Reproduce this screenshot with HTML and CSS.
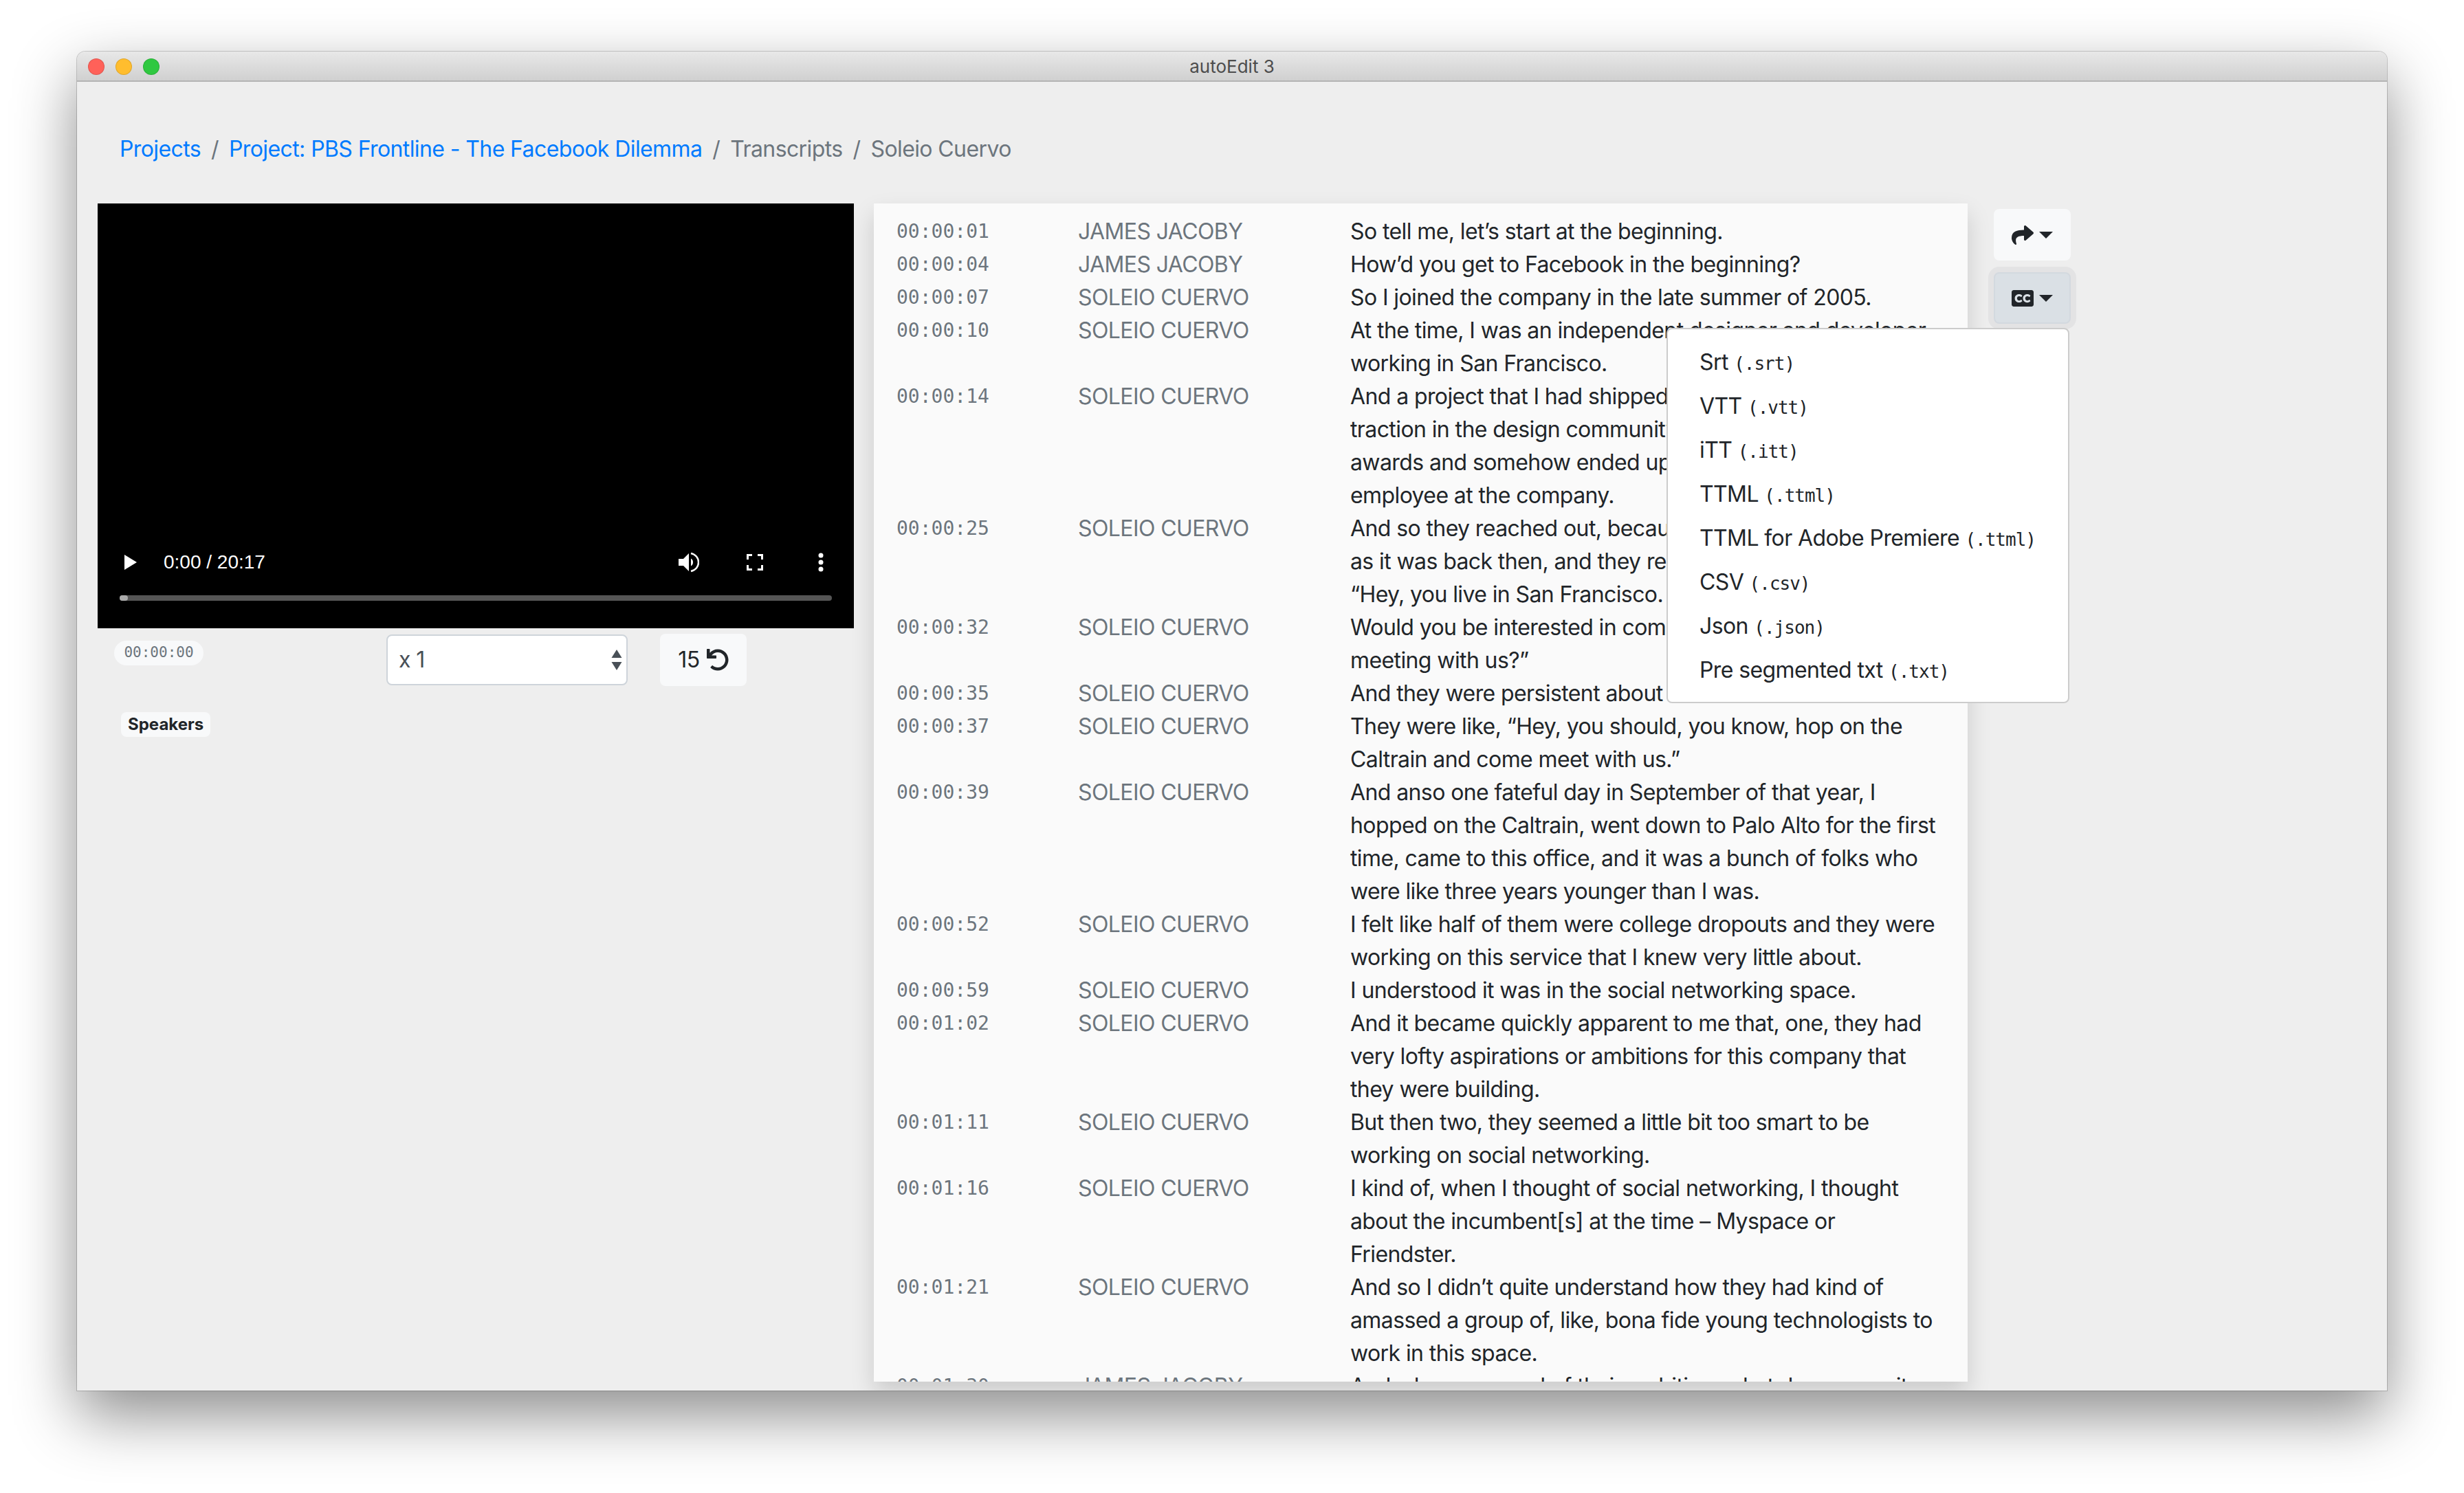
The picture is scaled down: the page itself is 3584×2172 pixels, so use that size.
FILE: index.html
```html
<!DOCTYPE html>
<html lang="en">
<head>
    <meta charset="UTF-8">
    <title>autoEdit 3</title>
    <link rel="stylesheet" href="styles.css">
</head>
<body>
    <div class="window">
        <div class="titlebar">
            <div class="lights">
                <span class="light red"></span>
                <span class="light yellow"></span>
                <span class="light green"></span>
            </div>
            <div class="title">autoEdit 3</div>
        </div>
        <nav class="breadcrumb">
            <a href="#">Projects</a><span class="sep">/</span>
            <a href="#">Project: PBS Frontline - The Facebook Dilemma</a><span class="sep">/</span>
            <span>Transcripts</span><span class="sep">/</span>
            <span>Soleio Cuervo</span>
        </nav>
        <div class="main">
            <section class="left">
                <div class="video">
                    <div class="controls">
                        <div class="ctrl">
                            <svg width="18" height="22" viewBox="0 0 18 22"><path d="M0 0L18 11L0 22Z" fill="#fff"/></svg>
                        </div>
                        <div class="time">0:00 / 20:17</div>
                        <div class="ctrl push">
                            <svg width="30" height="30" viewBox="0 0 30 30"><path d="M0 10H7L15 2V28L7 20H0Z" fill="#fff"/><path d="M18 9.5C20.5 11 21 13 21 15C21 17 20.5 19 18 20.5Z" fill="#fff"/><path d="M18 2C25 3.5 29 9 29 15C29 21 25 26.5 18 28" fill="none" stroke="#fff" stroke-width="2.5"/></svg>
                        </div>
                        <div class="ctrl">
                            <svg width="24" height="24" viewBox="0 0 24 24"><path d="M1.5 8V1.5H8M16 1.5H22.5V8M22.5 16V22.5H16M8 22.5H1.5V16" fill="none" stroke="#fff" stroke-width="3"/></svg>
                        </div>
                        <div class="ctrl">
                            <svg width="8" height="28" viewBox="0 0 8 28"><circle cx="4" cy="4" r="3.5" fill="#fff"/><circle cx="4" cy="14" r="3.5" fill="#fff"/><circle cx="4" cy="24" r="3.5" fill="#fff"/></svg>
                        </div>
                    </div>
                    <div class="track"><div class="thumb"></div></div>
                </div>
                <div class="tools">
                    <span class="timecode-pill">00:00:00</span>
                    <div class="speed">
                        <span>x 1</span>
                        <svg width="16" height="30" viewBox="0 0 16 30"><path d="M8 0L15.5 12H0.5Z" fill="#495057"/><path d="M0.5 18H15.5L8 30Z" fill="#495057"/></svg>
                    </div>
                    <div class="btn rewind">
                        <span>15</span>
                        <svg width="32" height="32" viewBox="0 0 512 512"><path fill="#212529" d="M212.333 224.333H12c-6.627 0-12-5.373-12-12V12C0 5.373 5.373 0 12 0h48c6.627 0 12 5.373 12 12v78.112C117.773 39.279 184.26 7.47 258.175 8.007c136.906.994 246.448 111.623 246.157 248.532C504.041 393.258 393.12 504 256.333 504c-64.089 0-122.496-24.313-166.51-64.215-5.099-4.622-5.334-12.554-.467-17.42l33.967-33.967c4.474-4.474 11.662-4.717 16.401-.525C170.76 415.336 211.58 432 256.333 432c97.268 0 176-78.716 176-176 0-97.267-78.716-176-176-176-58.496 0-110.28 28.476-142.274 72.333h98.274c6.627 0 12 5.373 12 12v48c0 6.627-5.373 12-12 12z"/></svg>
                    </div>
                </div>
                <span class="badge">Speakers</span>
            </section>

            <section class="transcript">
                <div class="row"><code>00:00:01</code><span class="who">JAMES JACOBY</span><p>So tell me, let’s start at the beginning.</p></div>
                <div class="row"><code>00:00:04</code><span class="who">JAMES JACOBY</span><p>How’d you get to Facebook in the beginning?</p></div>
                <div class="row"><code>00:00:07</code><span class="who">SOLEIO CUERVO</span><p>So I joined the company in the late summer of 2005.</p></div>
                <div class="row"><code>00:00:10</code><span class="who">SOLEIO CUERVO</span><p>At the time, I was an independent designer and developer<br>working in San Francisco.</p></div>
                <div class="row"><code>00:00:14</code><span class="who">SOLEIO CUERVO</span><p>And a project that I had shipped got a lot of<br>traction in the design community, won a few<br>awards and somehow ended up making me an<br>employee at the company.</p></div>
                <div class="row"><code>00:00:25</code><span class="who">SOLEIO CUERVO</span><p>And so they reached out, because it was small,<br>as it was back then, and they reached out, like,<br>“Hey, you live in San Francisco. We’re here.</p></div>
                <div class="row"><code>00:00:32</code><span class="who">SOLEIO CUERVO</span><p>Would you be interested in coming down for a<br>meeting with us?”</p></div>
                <div class="row"><code>00:00:35</code><span class="who">SOLEIO CUERVO</span><p>And they were persistent about it.</p></div>
                <div class="row"><code>00:00:37</code><span class="who">SOLEIO CUERVO</span><p>They were like, “Hey, you should, you know, hop on the<br>Caltrain and come meet with us.”</p></div>
                <div class="row"><code>00:00:39</code><span class="who">SOLEIO CUERVO</span><p>And anso one fateful day in September of that year, I<br>hopped on the Caltrain, went down to Palo Alto for the first<br>time, came to this office, and it was a bunch of folks who<br>were like three years younger than I was.</p></div>
                <div class="row"><code>00:00:52</code><span class="who">SOLEIO CUERVO</span><p>I felt like half of them were college dropouts and they were<br>working on this service that I knew very little about.</p></div>
                <div class="row"><code>00:00:59</code><span class="who">SOLEIO CUERVO</span><p>I understood it was in the social networking space.</p></div>
                <div class="row"><code>00:01:02</code><span class="who">SOLEIO CUERVO</span><p>And it became quickly apparent to me that, one, they had<br>very lofty aspirations or ambitions for this company that<br>they were building.</p></div>
                <div class="row"><code>00:01:11</code><span class="who">SOLEIO CUERVO</span><p>But then two, they seemed a little bit too smart to be<br>working on social networking.</p></div>
                <div class="row"><code>00:01:16</code><span class="who">SOLEIO CUERVO</span><p>I kind of, when I thought of social networking, I thought<br>about the incumbent[s] at the time – Myspace or<br>Friendster.</p></div>
                <div class="row"><code>00:01:21</code><span class="who">SOLEIO CUERVO</span><p>And so I didn’t quite understand how they had kind of<br>amassed a group of, like, bona fide young technologists to<br>work in this space.</p></div>
                <div class="row"><code>00:01:30</code><span class="who">JAMES JACOBY</span><p>And when you read of their ambition, what do you see it</p></div>
            </section>

            <aside class="actions">
                <div class="btn action">
                    <svg width="32" height="32" viewBox="0 0 512 512"><path fill="#212529" d="M503.691 189.836L327.687 37.851C312.281 24.546 288 35.347 288 56.015v80.053C127.371 137.907 0 170.1 0 322.326c0 61.441 39.581 122.309 83.333 154.132 13.653 9.931 33.111-2.533 28.077-18.631C66.066 312.814 132.917 274.316 288 272.085V360c0 20.7 24.3 31.453 39.687 18.164l176.004-152c11.071-9.562 11.086-26.753 0-36.328z"/></svg>
                    <span class="caret"></span>
                </div>
                <div class="btn action active">
                    <svg width="32" height="32" viewBox="0 0 512 512"><path fill="#212529" d="M464 64H48C21.5 64 0 85.5 0 112v288c0 26.5 21.5 48 48 48h416c26.5 0 48-21.5 48-48V112c0-26.5-21.5-48-48-48zM218.1 287.7c2.8-2.5 7.1-2.1 9.2.9l19.5 27.7c1.7 2.4 1.5 5.6-.5 7.7-53.6 56.8-172.8 32.1-172.8-67.9 0-97.3 121.7-119.5 172.5-70.1 2.1 2 2.5 3.2 1 5.7l-17.5 30.5c-1.9 3.1-6.2 4-9.1 1.7-40.8-32-94.6-14.9-94.6 31.2.1 48 51.1 70.5 92.3 32.6zm190.4 0c2.8-2.5 7.1-2.1 9.2.9l19.5 27.7c1.7 2.4 1.5 5.6-.5 7.7-53.5 56.9-172.7 32.1-172.7-67.9 0-97.3 121.7-119.5 172.5-70.1 2.1 2 2.5 3.2 1 5.7L420 222.2c-1.9 3.1-6.2 4-9.1 1.7-40.8-32-94.6-14.9-94.6 31.2 0 48 51 70.5 92.2 32.6z"/></svg>
                    <span class="caret"></span>
                </div>
                <ul class="menu">
                    <li>Srt <code>(.srt)</code></li>
                    <li>VTT <code>(.vtt)</code></li>
                    <li>iTT <code>(.itt)</code></li>
                    <li>TTML <code>(.ttml)</code></li>
                    <li>TTML for Adobe Premiere <code>(.ttml)</code></li>
                    <li>CSV <code>(.csv)</code></li>
                    <li>Json <code>(.json)</code></li>
                    <li>Pre segmented txt <code>(.txt)</code></li>
                </ul>
            </aside>
        </div>
    </div>
</body>
</html>
```

FILE: styles.css
```css
*,
*::before,
*::after {
    box-sizing: border-box;
}
html, body {
    height: 100%;
}
body {
    margin: 0;
    padding: 75px 112px 0;
    background: #fff;
    font-family: Inter, "Noto Sans", sans-serif;
    font-size: 32px;
    line-height: 48px;
    letter-spacing: -.6px;
    color: #212529;
    overflow: hidden;
}
code {
    font-family: "DejaVu Sans Mono", monospace;
    letter-spacing: 0;
}

/* window */
.window {
    height: 1948px;
    display: flex;
    flex-direction: column;
    background: #eee;
    border-radius: 12px 12px 0 0;
    overflow: hidden;
    box-shadow: 0 36px 90px rgba(0, 0, 0, .45), 0 0 0 1px rgba(0, 0, 0, .18);
}
.titlebar {
    flex: none;
    height: 44px;
    padding-top: 2px;
    display: grid;
    grid-template-columns: 1fr auto 1fr;
    align-items: center;
    background: linear-gradient(#e8e8e8, #d0d0d0);
    border-bottom: 2px solid #b4b4b4;
}
.lights {
    display: flex;
    gap: 16px;
    padding-left: 16px;
}
.light {
    width: 24px;
    height: 24px;
    border-radius: 50%;
    border: 1px solid rgba(0, 0, 0, .12);
}
.red { background: #ff6159; }
.yellow { background: #ffbd2e; }
.green { background: #2fc840; }
.title {
    font-size: 26px;
    line-height: 32px;
    letter-spacing: 0;
    color: #4d4d4d;
}

.breadcrumb {
    flex: none;
    display: flex;
    margin-top: 50px;
    padding: 24px 62px;
    height: 96px;
    color: #6c757d;
}
.breadcrumb a {
    color: #007bff;
    text-decoration: none;
}
.sep {
    padding: 0 15px;
}

.main {
    flex: 1;
    min-height: 0;
    display: flex;
    padding: 31px 0 14px 30px;
}

/* left column */
.left {
    flex: none;
    width: 1100px;
}
.video {
    height: 618px;
    background: #000;
    display: flex;
    flex-direction: column;
    justify-content: flex-end;
    padding-bottom: 40px;
}
.controls {
    display: flex;
    align-items: center;
    height: 48px;
    margin-bottom: 24px;
}
.ctrl {
    width: 96px;
    display: flex;
    justify-content: center;
    align-items: center;
}
.push {
    margin-left: auto;
}
.time {
    font-family: "Liberation Sans", Arial, sans-serif;
    font-size: 28px;
    letter-spacing: 0;
    color: #fff;
}
.track {
    height: 8px;
    margin: 0 32px;
    background: #555;
    border-radius: 4px;
}
.thumb {
    width: 12px;
    height: 8px;
    background: #aaa;
    border-radius: 4px;
}
.tools {
    display: flex;
    align-items: flex-start;
    padding: 8px 0 0 24px;
}
.timecode-pill {
    width: 130px;
    height: 36px;
    margin: 10px 266px 0 0;
    text-align: center;
    font-family: "DejaVu Sans Mono", monospace;
    font-size: 21px;
    line-height: 34px;
    letter-spacing: 0;
    color: #6c757d;
    background: #f8f9fa;
    border-radius: 18px;
}
.speed {
    width: 351px;
    height: 74px;
    padding: 0 6px 0 16px;
    display: flex;
    align-items: center;
    justify-content: space-between;
    background: #fff;
    border: 2px solid #ced4da;
    border-radius: 8px;
    color: #495057;
    margin-top: 1px;
}
.btn {
    display: flex;
    align-items: center;
    justify-content: center;
    background: #f8f9fa;
    border-radius: 8px;
}
.rewind {
    width: 126px;
    height: 76px;
    margin-left: 47px;
    gap: 10px;
}
.badge {
    display: inline-block;
    margin: 38px 0 0 34px;
    padding: 0 10px;
    height: 36px;
    font-size: 24px;
    font-weight: 700;
    line-height: 36px;
    letter-spacing: 0;
    background: #f8f9fa;
    border-radius: 8px;
}

/* transcript */
.transcript {
    flex: none;
    width: 1591px;
    height: 1714px;
    margin-left: 29px;
    padding: 17px 0 0 33px;
    background: #fafafa;
    box-shadow: 0 16px 32px rgba(0, 0, 0, .15);
    overflow: hidden;
}
.row {
    display: grid;
    grid-template-columns: 264px 396px 1fr;
}
.row code {
    font-size: 28px;
    color: #6c757d;
}
.who {
    color: #6c757d;
}
.row p {
    margin: 0;
    white-space: nowrap;
}

/* share + captions */
.actions {
    position: relative;
    flex: none;
    width: 112px;
    margin: 8px 0 0 38px;
    display: flex;
    flex-direction: column;
    gap: 17px;
}
.action {
    height: 75px;
    gap: 8px;
}
.active {
    background: #dae0e5;
    border: 2px solid #d3d9df;
    box-shadow: 0 0 0 8px #e3e3e4;
}
.caret {
    border-top: 10px solid #212529;
    border-left: 10px solid transparent;
    border-right: 10px solid transparent;
}
.menu {
    position: absolute;
    top: 173px;
    right: 2px;
    width: 586px;
    height: 546px;
    margin: 0;
    padding: 16px 0;
    list-style: none;
    background: #fff;
    border: 2px solid #ccc;
    border-radius: 8px;
}
.menu li {
    height: 64px;
    padding: 0 46px;
    line-height: 64px;
    white-space: nowrap;
}
.menu code {
    font-size: 26px;
    letter-spacing: -1px;
}
```
